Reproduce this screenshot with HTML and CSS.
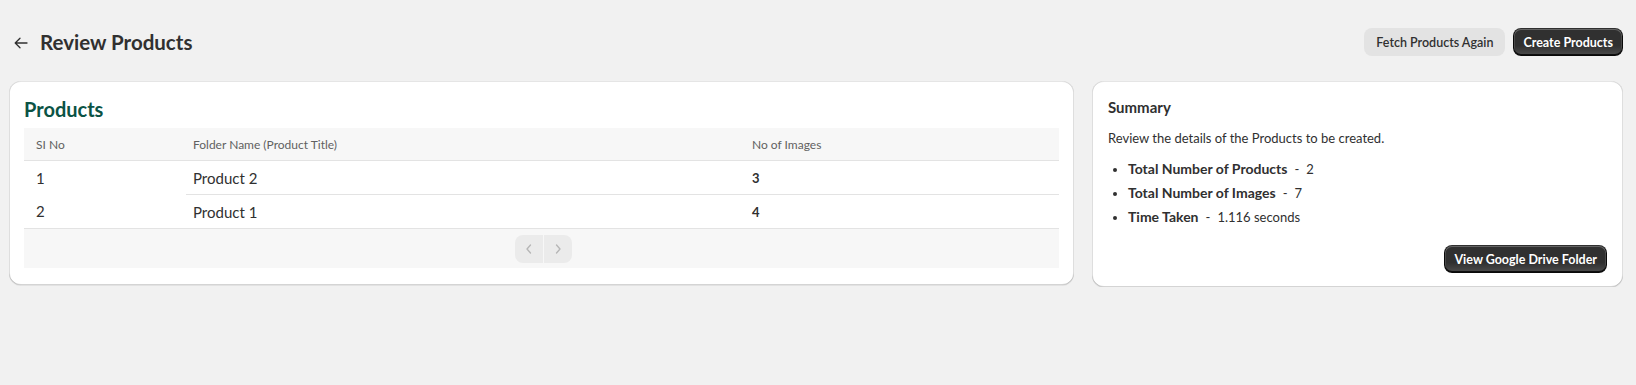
FILE: index.html
```html
<!DOCTYPE html>
<html lang="en">
<head>
  <meta charset="UTF-8">
  <meta name="viewport" content="width=device-width, initial-scale=1.0">
  <title>Review Products</title>
  <link rel="stylesheet" href="styles.css">
</head>
<body>
  <div class="page">
    <div class="page-header">
      <div class="title-wrap">
        <button class="back-btn" aria-label="Back">
          <svg width="14" height="12" viewBox="0 0 14 12" fill="none">
            <path d="M13 6H1.5M6 1.2L1.2 6L6 10.8" stroke="#303030" stroke-width="1.3" stroke-linecap="round" stroke-linejoin="round"/>
          </svg>
        </button>
        <h1 class="page-title">Review Products</h1>
      </div>
      <div class="actions">
        <button class="btn">Fetch Products Again</button>
        <button class="btn btn-primary">Create Products</button>
      </div>
    </div>

    <div class="layout">
      <div class="card card-main">
        <h2 class="card-title">Products</h2>
        <table class="data-table">
          <thead>
            <tr>
              <th class="col-no">SI No</th>
              <th class="col-name">Folder Name (Product Title)</th>
              <th class="col-count">No of Images</th>
            </tr>
          </thead>
          <tbody>
            <tr>
              <td class="col-no">1</td>
              <td class="col-name">Product 2</td>
              <td class="col-count">3</td>
            </tr>
            <tr>
              <td class="col-no">2</td>
              <td class="col-name">Product 1</td>
              <td class="col-count">4</td>
            </tr>
          </tbody>
        </table>
        <div class="table-footer">
          <div class="pagination">
            <button class="page-btn" disabled aria-label="Previous">
              <svg width="8" height="12" viewBox="0 0 8 12" fill="none"><path d="M5.5 2L2 6L5.5 10" stroke="#b5b5b5" stroke-width="1.3" stroke-linecap="round" stroke-linejoin="round"/></svg>
            </button>
            <button class="page-btn" disabled aria-label="Next">
              <svg width="8" height="12" viewBox="0 0 8 12" fill="none"><path d="M2.5 2L6 6L2.5 10" stroke="#b5b5b5" stroke-width="1.3" stroke-linecap="round" stroke-linejoin="round"/></svg>
            </button>
          </div>
        </div>
      </div>

      <div class="card card-side">
        <h3 class="summary-title">Summary</h3>
        <p class="summary-text">Review the details of the Products to be created.</p>
        <ul class="summary-list">
          <li><strong>Total Number of Products</strong><span class="sep">-</span>2</li>
          <li><strong>Total Number of Images</strong><span class="sep">-</span>7</li>
          <li><strong>Time Taken</strong><span class="sep">-</span>1.116 seconds</li>
        </ul>
        <div class="summary-actions">
          <button class="btn btn-primary">View Google Drive Folder</button>
        </div>
      </div>
    </div>
  </div>
</body>
</html>
```

FILE: styles.css
```css
body {
  margin: 0;
  background: #f1f1f1;
  font-family: 'Lato', 'Open Sans', sans-serif;
  color: #303030;
}
.page {
  padding: 28px 13px 0 9px;
}
.page-header {
  display: flex;
  justify-content: space-between;
  align-items: center;
  height: 28px;
  margin-bottom: 25px;
}
.title-wrap {
  display: flex;
  align-items: center;
  gap: 12px;
  padding-left: 5px;
}
.back-btn {
  border: 0;
  background: transparent;
  padding: 0;
  width: 14px;
  height: 14px;
  display: flex;
  align-items: center;
  justify-content: center;
  margin-top: 1px;
}
.page-title {
  margin: 0;
  font-size: 20.5px;
  font-weight: 700;
  line-height: 28px;
  color: #303030;
}
.actions {
  display: flex;
  gap: 8px;
}
.btn {
  font-family: inherit;
  font-size: 12.5px;
  font-weight: 600;
  height: 28px;
  padding: 0 12px;
  border: 0;
  border-radius: 8px;
  background: #e3e3e3;
  color: #303030;
}
.btn-primary {
  padding: 0 10px;
  background: linear-gradient(180deg, rgba(48,48,48,0) 63%, rgba(255,255,255,0.15) 100%), #303030;
  color: #fff;
  font-weight: 700;
  box-shadow: inset 0 -1px 0 1px rgba(0,0,0,0.8), inset 0 0 0 1px #303030, inset 0 0.5px 0 1.5px rgba(255,255,255,0.25);
}
.layout {
  display: flex;
  gap: 18px;
  align-items: flex-start;
}
.card {
  background: #fff;
  border-radius: 12px;
  box-shadow: 0 1px 0 0 rgba(26,26,26,0.07), inset 0 1px 0 0 rgba(204,204,204,0.5), inset 0 -1px 0 0 rgba(0,0,0,0.17), inset -1px 0 0 0 rgba(0,0,0,0.13), inset 1px 0 0 0 rgba(0,0,0,0.13);
  box-sizing: border-box;
}
.card-main {
  flex: 0 0 1065px;
  padding: 16px 15px 17px;
}
.card-side {
  flex: 1 1 auto;
  min-width: 0;
  padding: 16px 16px 14px 16px;
}
.card-title {
  margin: 0 0 7px;
  font-size: 20px;
  line-height: 24px;
  font-weight: 700;
  color: #0b5345;
}
.data-table {
  width: 100%;
  border-collapse: collapse;
  table-layout: fixed;
}
.data-table th {
  background: #f7f7f7;
  height: 32px;
  padding: 0 7px;
  text-align: left;
  font-size: 12px;
  font-weight: 400;
  color: #616161;
  border-bottom: 1px solid #e3e3e3;
}
.data-table td {
  height: 33px;
  padding: 0 7px;
  font-size: 15px;
  color: #303030;
}
.data-table tbody tr:first-child td.col-name,
.data-table tbody tr:first-child td.col-count {
  border-bottom: 1px solid #e3e3e3;
}
.data-table .col-no {
  width: 162px;
  padding-left: 12px;
  box-sizing: border-box;
}
.data-table .col-name {
  width: 545px;
}
.data-table td.col-count {
  font-size: 13px;
  font-weight: 700;
}
.table-footer {
  background: #f7f7f7;
  border-top: 1px solid #e3e3e3;
  padding: 6px 0 5px;
  display: flex;
  justify-content: center;
}
.pagination {
  display: flex;
  gap: 1px;
  margin-left: 4px;
}
.page-btn {
  width: 28px;
  height: 28px;
  border: 0;
  padding: 0;
  background: #ebebeb;
  display: flex;
  align-items: center;
  justify-content: center;
}
.page-btn:first-child {
  border-radius: 8px 0 0 8px;
}
.page-btn:last-child {
  border-radius: 0 8px 8px 0;
}
.summary-title {
  margin: 0;
  font-size: 15px;
  line-height: 20px;
  font-weight: 700;
}
.summary-text {
  margin: 11px 0 0;
  font-size: 13px;
  line-height: 20px;
}
.summary-list {
  margin: 9px 0 0;
  padding-left: 20px;
  font-size: 13px;
  line-height: 24px;
}
.summary-list strong {
  font-size: 14px;
  font-weight: 700;
}
.sep {
  margin: 0 7px;
}
.summary-actions {
  display: flex;
  justify-content: flex-end;
  margin-top: 16px;
}
```
